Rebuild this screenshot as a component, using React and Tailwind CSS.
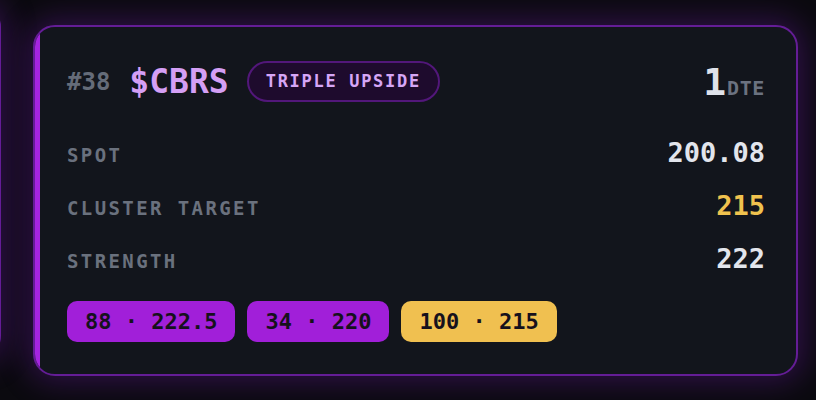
const mono = { fontFamily: '"DejaVu Sans Mono", "Liberation Mono", monospace' };

const rows = [
  { label: 'SPOT', value: '200.08', tone: 'text-[#e2e5ec]' },
  { label: 'CLUSTER TARGET', value: '215', tone: 'text-[#f0c24e]' },
  { label: 'STRENGTH', value: '222', tone: 'text-[#e2e5ec]' },
];

const chips = [
  { text: '88 · 222.5', cls: 'bg-[#a11fd9]' },
  { text: '34 · 220', cls: 'bg-[#a11fd9]' },
  { text: '100 · 215', cls: 'bg-[#f0c050]' },
];

const SetupCard = () => {
  return (
    <div className="flex w-[765px] h-[351px] shrink-0 overflow-hidden rounded-[22px] border-2 border-[#641d96] bg-[#12151c] shadow-[0_0_30px_6px_rgba(120,30,190,0.32)]">
      <div className="w-[5px] shrink-0 bg-[#a524e0]" />
      <div className="flex-1 pl-[27px] pr-[31px] pt-[34px]">
        <div className="flex h-[41px] items-center justify-between">
          <div className="flex items-center">
            <span className="text-[24px] font-bold text-[#656c79]">#38</span>
            <span className="ml-[19px] text-[33px] font-bold text-[#d49ff5]">$CBRS</span>
            <span className="ml-[18px] flex h-[41px] items-center rounded-full border-2 border-[#52177a] bg-[#1e0b2d] px-[17px] text-[17px] font-bold tracking-[0.1em] text-[#d6a6f6]">
              TRIPLE UPSIDE
            </span>
          </div>
          <div className="flex items-baseline">
            <span className="text-[38px] font-bold leading-none text-[#dfe2ea]">1</span>
            <span className="ml-[1px] text-[20px] font-bold leading-none tracking-[0.03em] text-[#6b7280]">DTE</span>
          </div>
        </div>

        <div className="mt-[24px]">
          {rows.map((r) => (
            <div key={r.label} className="flex items-baseline justify-between">
              <span className="text-[19px] font-bold leading-none tracking-[2.4px] text-[#6a717e]">{r.label}</span>
              <span className={`text-[27px] font-bold leading-[53px] ${r.tone}`}>{r.value}</span>
            </div>
          ))}
        </div>

        <div className="mt-[16px] flex gap-[12px]">
          {chips.map((c) => (
            <span
              key={c.text}
              className={`flex h-[41px] items-center rounded-[10px] px-[18px] text-[22px] font-bold text-[#16111c] ${c.cls}`}
            >
              {c.text}
            </span>
          ))}
        </div>
      </div>
    </div>
  );
};

export default function App() {
  return (
    <div className="h-[400px] w-[816px] overflow-hidden bg-[#0b0a0f]" style={mono}>
      <div className="flex gap-[32px] pt-[25px]">
        <div className="ml-[-299px] mt-[-20px] h-[353px] w-[300px] shrink-0 rounded-[22px] border-2 border-[#641d96] bg-[#12151c] shadow-[0_0_30px_6px_rgba(120,30,190,0.32)]" />
        <SetupCard />
      </div>
    </div>
  );
}
